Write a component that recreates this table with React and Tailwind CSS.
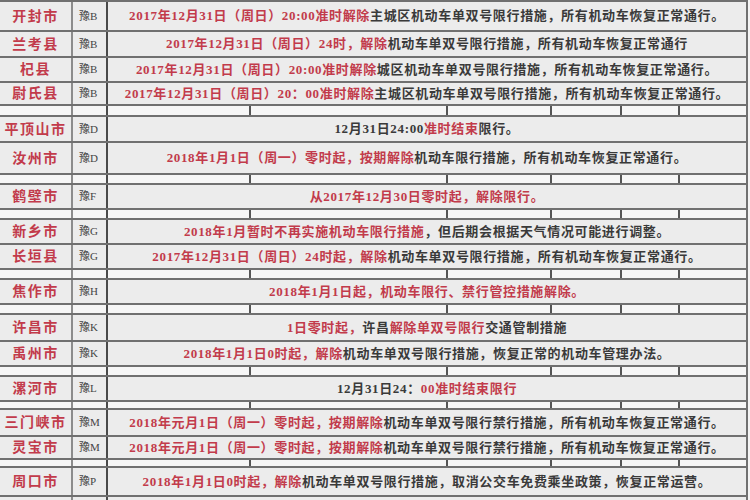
import React from "react";

const R = "r";
const K = "k";

const rows = [
  { h: "h-[30px]", city: "开封市", plate: "豫B", segs: [["2017年12月31日（周日）20:00准时解除", R], ["主城区机动车单双号限行措施，所有机动车恢复正常通行。", K]] },
  { h: "h-[26px]", city: "兰考县", plate: "豫B", segs: [["2017年12月31日（周日）24时，解除", R], ["机动车单双号限行措施，所有机动车恢复正常通行", K]] },
  { h: "h-[25px]", city: "杞县", plate: "豫B", segs: [["2017年12月31日（周日）20:00准时解除", R], ["城区机动车单双号限行措施，所有机动车恢复正常通行。", K]] },
  { h: "h-[23px]", city: "尉氏县", plate: "豫B", segs: [["2017年12月31日（周日）20：00准时解除", R], ["主城区机动车单双号限行措施，所有机动车恢复正常通行。", K]] },
  { spacer: true, h: "h-[11px]" },
  { h: "h-[26px]", city: "平顶山市", plate: "豫D", segs: [["12月31日24:00", K], ["准时结束", R], ["限行。", K]] },
  { h: "h-[32px]", city: "汝州市", plate: "豫D", segs: [["2018年1月1日（周一）零时起，按期解除", R], ["机动车限行措施，所有机动车恢复正常通行。", K]] },
  { spacer: true, h: "h-[10px]" },
  { h: "h-[25px]", city: "鹤壁市", plate: "豫F", segs: [["从2017年12月30日零时起，解除限行。", R]] },
  { spacer: true, h: "h-[10px]" },
  { h: "h-[25px]", city: "新乡市", plate: "豫G", segs: [["2018年1月暂时不再实施机动车限行措施", R], ["，但后期会根据天气情况可能进行调整。", K]] },
  { h: "h-[25px]", city: "长垣县", plate: "豫G", segs: [["2017年12月31日（周日）24时起，解除", R], ["机动车单双号限行措施，所有机动车恢复正常通行。", K]] },
  { spacer: true, h: "h-[10px]" },
  { h: "h-[25px]", city: "焦作市", plate: "豫H", segs: [["2018年1月1日起，机动车限行、禁行管控措施解除。", R]] },
  { spacer: true, h: "h-[10px]" },
  { h: "h-[27px]", city: "许昌市", plate: "豫K", segs: [["1日零时起，", R], ["许昌", K], ["解除单双号限行", R], ["交通管制措施", K]] },
  { h: "h-[25px]", city: "禹州市", plate: "豫K", segs: [["2018年1月1日0时起，解除", R], ["机动车单双号限行措施，恢复正常的机动车管理办法。", K]] },
  { spacer: true, h: "h-[10px]" },
  { h: "h-[25px]", city: "漯河市", plate: "豫L", segs: [["12月31日24：", K], ["00准时结束限行", R]] },
  { spacer: true, h: "h-[8px]" },
  { h: "h-[27px]", city: "三门峡市", plate: "豫M", segs: [["2018年元月1日（周一）零时起，按期解除", R], ["机动车单双号限行禁行措施，所有机动车恢复正常通行。", K]] },
  { h: "h-[23px]", city: "灵宝市", plate: "豫M", segs: [["2018年元月1日（周一）零时起，按期解除", R], ["机动车单双号限行禁行措施，所有机动车恢复正常通行。", K]] },
  { spacer: true, h: "h-[8px]" },
  { h: "h-[29px]", city: "周口市", plate: "豫P", segs: [["2018年1月1日0时起，解除", R], ["机动车单双号限行措施，取消公交车免费乘坐政策，恢复正常运营。", K]] },
  { h: "h-[26px]", city: "", plate: "", segs: [] },
];

const font = { fontFamily: '"Liberation Serif", "Noto Sans CJK SC", serif' };

function Spacer({ h }) {
  return (
    <div className={`flex ${h} border-b-2 border-[#707070] bg-[#f6f6f6]`}>
      <div className="w-[73px] border-r-2 border-[#8c8c8c]" />
      <div className="w-[35px] border-r-2 border-[#4a4a4a]" />
      <div className="flex flex-1">
        <div className="w-[143px] border-r-2 border-[#555]" />
        <div className="w-[197px] border-r-2 border-[#555]" />
        <div className="w-[104px] border-r-2 border-[#555]" />
        <div className="w-[70px] border-r-2 border-[#555]" />
        <div className="w-[58px] border-r-2 border-[#555]" />
        <div className="flex-1" />
      </div>
    </div>
  );
}

function Row({ row }) {
  return (
    <div className={`flex ${row.h} shrink-0 border-b-2 border-[#707070] bg-[#ececec]`}>
      <div className="flex w-[73px] items-center justify-center border-r-2 border-[#8c8c8c] text-[14px] font-bold tracking-[1.5px] text-[#c23b4b]">
        {row.city}
      </div>
      <div className="flex w-[35px] items-center border-r-2 border-[#4a4a4a] pl-[6px] text-[11px] text-[#444]">
        {row.plate}
      </div>
      <div className="flex flex-1 items-center justify-center whitespace-nowrap text-[13px] font-bold tracking-[0.65px]">
        {row.segs.map(([t, c], i) => (
          <span key={i} className={c === R ? "text-[#c23b4b]" : "text-[#3a3a3a]"}>
            {t}
          </span>
        ))}
      </div>
    </div>
  );
}

export default function App() {
  return (
    <div className="h-[500px] w-[750px] overflow-hidden bg-[#f4f4f4]" style={font}>
      <div className="flex w-[748px] flex-col border-t-2 border-r-2 border-[#707070]">
        {rows.map((row, i) =>
          row.spacer ? <Spacer key={i} h={row.h} /> : <Row key={i} row={row} />
        )}
      </div>
    </div>
  );
}
